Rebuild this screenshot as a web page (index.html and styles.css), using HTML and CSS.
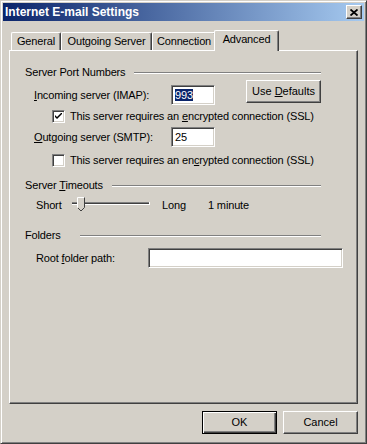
FILE: index.html
```html
<!DOCTYPE html>
<html lang="en">

<head>
    <meta charset="UTF-8">
    <meta name="viewport" content="width=device-width, initial-scale=1.0">
    <title>Internet E-mail Settings</title>
    <link rel="stylesheet" href="styles.css">
</head>

<body>
    <div class="window">
        <div class="titlebar">
            <span class="title">Internet E-mail Settings</span>
            <span class="close-btn">
                <svg width="8" height="7" viewBox="0 0 8 7">
                    <path d="M0.5 0.5 L7.5 6.5 M7.5 0.5 L0.5 6.5" stroke="#000" stroke-width="1.8" fill="none" />
                </svg>
            </span>
        </div>

        <div class="dialog-body">
            <div class="tabs">
                <div class="tab tab-general">General</div>
                <div class="tab tab-outgoing">Outgoing Server</div>
                <div class="tab tab-connection">Connection</div>
                <div class="tab tab-advanced active">Advanced</div>
            </div>

            <div class="panel">
                <!-- Server Port Numbers -->
                <div class="group-head">
                    <span>Server Port Numbers</span>
                    <span class="rule"></span>
                </div>

                <div class="field-row incoming">
                    <span class="field-label"><u>I</u>ncoming server (IMAP):</span>
                    <span class="textbox port"><span class="selected">993</span></span>
                    <button class="btn defaults">Use <u>D</u>efaults</button>
                </div>

                <label class="check-row check-first">
                    <span class="checkbox checked">
                        <svg width="7" height="7" viewBox="0 0 7 7">
                            <path d="M0 2 L0 4 L2 6 L7 1 L7 -1 L2 4 Z" fill="#000" />
                        </svg>
                    </span>
                    <span>This server requires an <u>e</u>ncrypted connection (SSL)</span>
                </label>

                <div class="field-row outgoing">
                    <span class="field-label"><u>O</u>utgoing server (SMTP):</span>
                    <span class="textbox port">25</span>
                </div>

                <label class="check-row check-second">
                    <span class="checkbox"></span>
                    <span>This server requires an en<u>c</u>rypted connection (SSL)</span>
                </label>

                <!-- Server Timeouts -->
                <div class="group-head timeouts-head">
                    <span>Server <u>T</u>imeouts</span>
                    <span class="rule"></span>
                </div>

                <div class="slider-row">
                    <span class="slider-label">Short</span>
                    <svg class="slider" width="80" height="20" viewBox="0 0 80 20">
                        <rect x="0" y="8" width="78" height="1" fill="#808080" />
                        <rect x="0" y="9" width="78" height="1" fill="#404040" />
                        <rect x="0" y="10" width="78" height="1" fill="#ffffff" />
                        <rect x="77" y="8" width="1" height="3" fill="#ffffff" />
                        <path d="M5.5 3.5 L12.5 3.5 L12.5 13.5 L9.5 16.5 L8.5 16.5 L5.5 13.5 Z" fill="#d4d0c8" />
                        <path d="M5.5 13.5 L5.5 3.5 L12.5 3.5" stroke="#ffffff" stroke-width="1" fill="none" />
                        <path d="M12.5 3.5 L12.5 13.5 L9 17 L6 14" stroke="#404040" stroke-width="1" fill="none" />
                    </svg>
                    <span class="slider-long">Long</span>
                    <span class="slider-value">1 minute</span>
                </div>

                <!-- Folders -->
                <div class="group-head folders-head">
                    <span>Folders</span>
                    <span class="rule"></span>
                </div>

                <div class="field-row root-row">
                    <span class="root-label">Root <u>f</u>older path:</span>
                    <span class="textbox root-path"></span>
                </div>
            </div>

            <div class="footer">
                <button class="btn default">OK</button>
                <button class="btn">Cancel</button>
            </div>
        </div>
    </div>
</body>

</html>
```

FILE: styles.css
```css
* {
    box-sizing: border-box;
}

html,
body {
    margin: 0;
    padding: 0;
    background: #d4d0c8;
}

body {
    font-family: "Liberation Sans", Arial, sans-serif;
    font-size: 11px;
    line-height: 13px;
    letter-spacing: -0.15px;
    color: #000;
}

u {
    text-decoration: underline;
    text-underline-offset: 1px;
}

.window {
    width: 367px;
    height: 444px;
    background: #d4d0c8;
    border: 1px solid;
    border-color: #d4d0c8 #404040 #404040 #d4d0c8;
    box-shadow: inset 1px 1px #ffffff, inset -1px -1px #808080;
    padding: 2px;
    display: flex;
    flex-direction: column;
}

.titlebar {
    height: 18px;
    background: linear-gradient(to right, #0a246a, #a6caf0);
    display: flex;
    align-items: center;
    justify-content: space-between;
    padding: 0 2px 0 2px;
}

.title {
    color: #fff;
    font-weight: bold;
    font-size: 12px;
    letter-spacing: 0;
}

.close-btn {
    width: 16px;
    height: 14px;
    background: #d4d0c8;
    border: 1px solid;
    border-color: #ffffff #404040 #404040 #ffffff;
    box-shadow: inset -1px -1px #808080;
    display: flex;
    align-items: center;
    justify-content: center;
}

.dialog-body {
    flex: 1;
    padding: 9px 6px 7px 6px;
    display: flex;
    flex-direction: column;
}

/* tabs */
.tabs {
    display: flex;
    align-items: flex-end;
    height: 20px;
    padding-left: 2px;
}

.tab {
    height: 18px;
    padding-top: 2px;
    text-align: center;
    border: 1px solid;
    border-bottom: none;
    border-color: #ffffff #404040 #ffffff #ffffff;
    border-radius: 2px 2px 0 0;
    box-shadow: inset -1px 0 #808080;
    background: #d4d0c8;
    white-space: nowrap;
}

.tab-general {
    width: 50px;
}

.tab-outgoing {
    width: 91px;
}

.tab-connection {
    width: 64px;
}

.tab-advanced {
    width: 65px;
}

.tab.active {
    height: 21px;
    margin: 0 0 -1px -2px;
    position: relative;
    z-index: 1;
}

.panel {
    height: 354px;
    border: 1px solid;
    border-color: #ffffff #404040 #404040 #ffffff;
    box-shadow: inset -1px -1px #808080;
    padding: 15px 14px 0 15px;
}

/* group headers */
.group-head {
    display: flex;
    align-items: center;
    height: 13px;
    margin-right: 22px;
}

.rule {
    flex: 1;
    height: 2px;
    margin-left: 9px;
    border-top: 1px solid #808080;
    border-bottom: 1px solid #ffffff;
}

.timeouts-head {
    margin-top: 12px;
}

.folders-head {
    margin-top: 14px;
}

.folders-head .rule {
    margin-left: 19px;
}

/* fields */
.field-row {
    display: flex;
    align-items: center;
    height: 20px;
}

.incoming {
    margin-top: 6px;
    margin-left: 9px;
}

.outgoing {
    margin-top: 4px;
    margin-left: 9px;
}

.field-label {
    width: 137px;
}

.textbox {
    height: 20px;
    background: #fff;
    border: 1px solid;
    border-color: #808080 #ffffff #ffffff #808080;
    box-shadow: inset 1px 1px #404040, inset -1px -1px #d4d0c8;
    padding: 3px 0 0 3px;
}

.port {
    width: 44px;
}

.selected {
    background: #0a246a;
    color: #fff;
}

.btn {
    width: 75px;
    height: 23px;
    padding: 0;
    font: inherit;
    color: #000;
    background: #d4d0c8;
    border: 1px solid;
    border-color: #ffffff #404040 #404040 #ffffff;
    box-shadow: inset -1px -1px #808080;
}

.btn.default {
    border-color: #000;
    box-shadow: inset 1px 1px #ffffff, inset -1px -1px #404040, inset -2px -2px #808080;
}

.defaults {
    align-self: flex-start;
    margin-top: -5px;
    margin-left: 31px;
}

/* checkboxes */
.check-row {
    display: flex;
    align-items: center;
    height: 13px;
    margin-left: 27px;
}

.check-first {
    margin-top: 5px;
}

.check-second {
    margin-top: 7px;
}

.checkbox {
    width: 13px;
    height: 13px;
    margin-right: 5px;
    background: #fff;
    border: 1px solid;
    border-color: #808080 #ffffff #ffffff #808080;
    box-shadow: inset 1px 1px #404040, inset -1px -1px #d4d0c8;
    display: flex;
    align-items: center;
    justify-content: center;
}

/* slider */
.slider-row {
    display: flex;
    align-items: center;
    height: 20px;
    margin-top: 3px;
    margin-left: 11px;
}

.slider-label {
    width: 36px;
}

.slider {
    display: block;
    margin-top: -2px;
}

.slider-long {
    margin-left: 10px;
    width: 46px;
}

/* root folder */
.root-row {
    margin-top: 6px;
    margin-left: 11px;
}

.root-label {
    width: 112px;
}

.root-path {
    flex: 1;
}

/* footer */
.footer {
    display: flex;
    justify-content: flex-end;
    gap: 6px;
    padding-top: 7px;
}
```
